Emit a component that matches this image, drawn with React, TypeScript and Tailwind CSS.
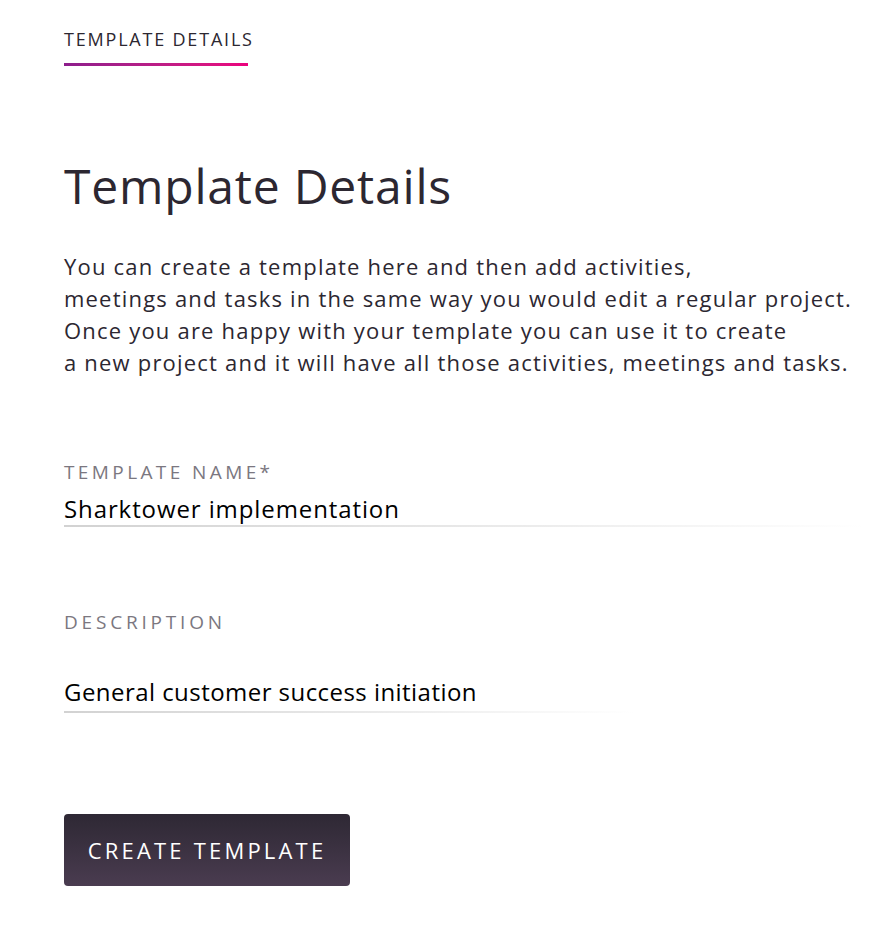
export default function App() {
  const font = { fontFamily: '"Open Sans", "Noto Sans", sans-serif' };
  return (
    <div className="min-h-[934px] bg-white text-[#2c2731]" style={font}>
      <div className="px-16">
        {/* Tab */}
        <div className="pt-[26px]">
          <div className="text-[18px] leading-[26px] tracking-[1.8px] text-[#2c2731]">TEMPLATE DETAILS</div>
          <div className="mt-[11px] h-[3px] w-[184px] bg-gradient-to-r from-[#8d1d8c] to-[#ec007d]" />
        </div>

        {/* Heading */}
        <h1 className="mt-[92px] text-[48px] leading-[56px] font-normal tracking-[0.8px] text-[#2c2731]">Template Details</h1>

        <p className="mt-[36px] whitespace-nowrap text-[22px] leading-[32px] tracking-[1.2px] text-[#2c2731]">
          You can create a template here and then add activities,
          <br />
          meetings and tasks in the same way you would edit a regular project.
          <br />
          Once you are happy with your template you can use it to create
          <br />
          a new project and it will have all those activities, meetings and tasks.
        </p>

        {/* Template name */}
        <div className="mt-[82px]">
          <div className="text-[19px] leading-[24px] tracking-[3.4px] text-[#7b7780]">TEMPLATE NAME*</div>
          <div className="mt-[9px] text-[24px] leading-[32px] tracking-[0.9px] text-black">Sharktower implementation</div>
          <div className="h-[2px] w-[800px] bg-gradient-to-r from-[#d2d2d2] via-[#e8e8e8] to-white" />
        </div>

        {/* Description */}
        <div className="mt-[83px]">
          <div className="text-[19px] leading-[24px] tracking-[3.8px] text-[#7b7780]">DESCRIPTION</div>
          <div className="mt-[42px] text-[24px] leading-[32px] tracking-[0.45px] text-black">General customer success initiation</div>
          <div className="mt-[3px] h-[2px] w-[570px] bg-gradient-to-r from-[#d2d2d2] via-[#e8e8e8] to-white" />
        </div>

        <button className="mt-[101px] h-[72px] w-[286px] rounded-[4px] bg-gradient-to-b from-[#2e2834] to-[#4a3c50] text-[22px] tracking-[3.2px] text-white">
          CREATE TEMPLATE
        </button>
      </div>
    </div>
  );
}
